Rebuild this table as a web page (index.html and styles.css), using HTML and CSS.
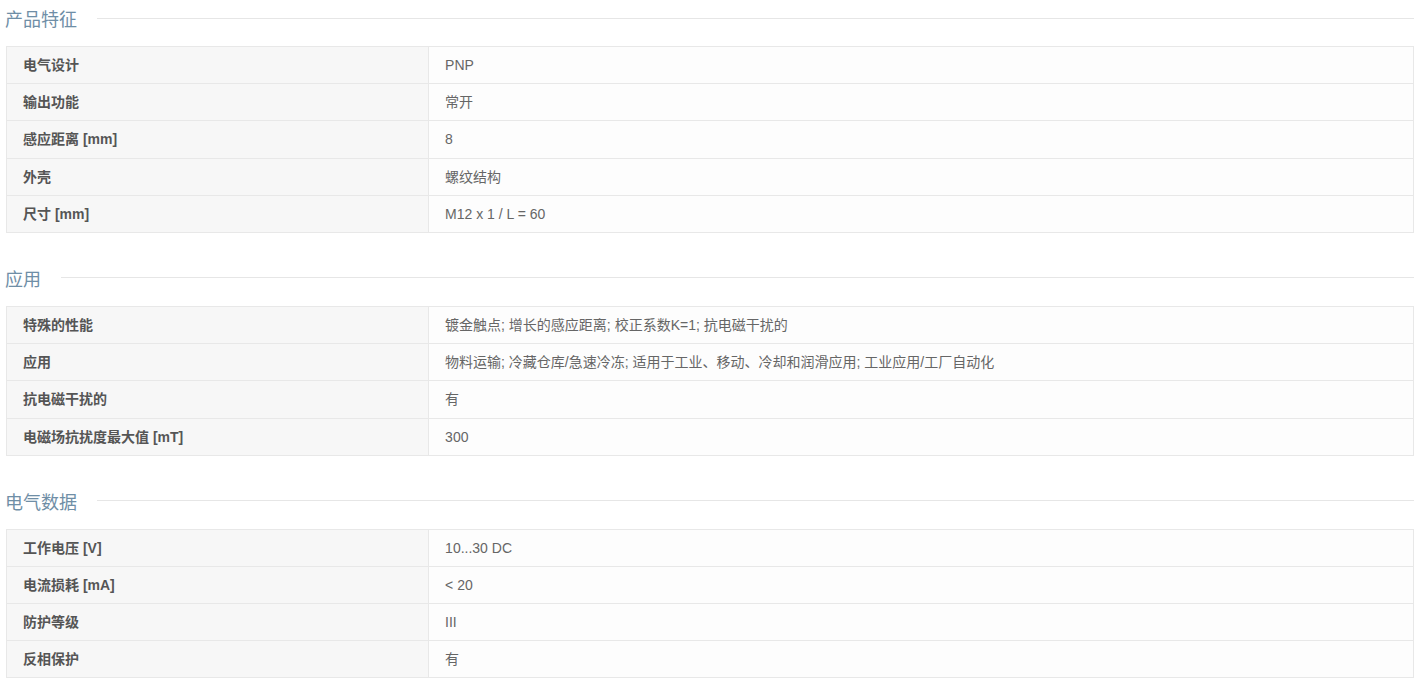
FILE: index.html
```html
<!DOCTYPE html>
<html>
<head>
    <meta charset="utf-8" />
    <title>产品参数</title>
    <meta name="viewport" content="width=device-width, initial-scale=1">
    <link rel="stylesheet" href="styles.css">
</head>
<body>
    <div class="specs">
        <div class="group">
            <h3 class="title"><span>产品特征</span></h3>
            <table class="table">
                <tr><td class="name">电气设计</td><td>PNP</td></tr>
                <tr><td class="name">输出功能</td><td>常开</td></tr>
                <tr><td class="name">感应距离 [mm]</td><td>8</td></tr>
                <tr><td class="name">外壳</td><td>螺纹结构</td></tr>
                <tr><td class="name">尺寸 [mm]</td><td>M12 x 1 / L = 60</td></tr>
            </table>
        </div>
        <div class="group">
            <h3 class="title"><span>应用</span></h3>
            <table class="table">
                <tr><td class="name">特殊的性能</td><td>镀金触点; 增长的感应距离; 校正系数K=1; 抗电磁干扰的</td></tr>
                <tr><td class="name">应用</td><td>物料运输; 冷藏仓库/急速冷冻; 适用于工业、移动、冷却和润滑应用; 工业应用/工厂自动化</td></tr>
                <tr><td class="name">抗电磁干扰的</td><td>有</td></tr>
                <tr><td class="name">电磁场抗扰度最大值 [mT]</td><td>300</td></tr>
            </table>
        </div>
        <div class="group">
            <h3 class="title"><span>电气数据</span></h3>
            <table class="table">
                <tr><td class="name">工作电压 [V]</td><td>10...30 DC</td></tr>
                <tr><td class="name">电流损耗 [mA]</td><td>&lt; 20</td></tr>
                <tr><td class="name">防护等级</td><td>III</td></tr>
                <tr><td class="name">反相保护</td><td>有</td></tr>
            </table>
        </div>
    </div>
</body>
</html>
```

FILE: styles.css
```css
*{
    margin: 0;
    padding: 0;
}
body{
    background: #fff;
    font-family: "Liberation Sans", "Noto Sans CJK SC", sans-serif;
    font-size: 14px;
    color: #666;
}
.specs{
    padding: 0 8px 0 6px;
}
.group{
    margin-bottom: 27px;
}
.title{
    display: flex;
    align-items: center;
    height: 36px;
    margin-bottom: 10px;
    margin-left: -1px;
    font-family: "Noto Sans CJK SC", sans-serif;
    font-size: 18px;
    font-weight: normal;
    color: #6f8ea6;
}
.title::after{
    content: "";
    flex: 1;
    height: 1px;
    background: #e6e6e6;
    margin-left: 20px;
}
.table{
    width: 100%;
    border-collapse: collapse;
    border: 1px solid #e8e8e8;
}
.table td{
    height: 37.2px;
    padding: 0 16px;
    border-top: 1px solid #e8e8e8;
    vertical-align: middle;
    background: #fdfdfd;
    line-height: 16px;
    box-sizing: border-box;
}
.table td.name{
    width: 30%;
    background: #f7f7f7;
    border-right: 1px solid #e8e8e8;
    font-weight: bold;
    color: #555;
}
```
